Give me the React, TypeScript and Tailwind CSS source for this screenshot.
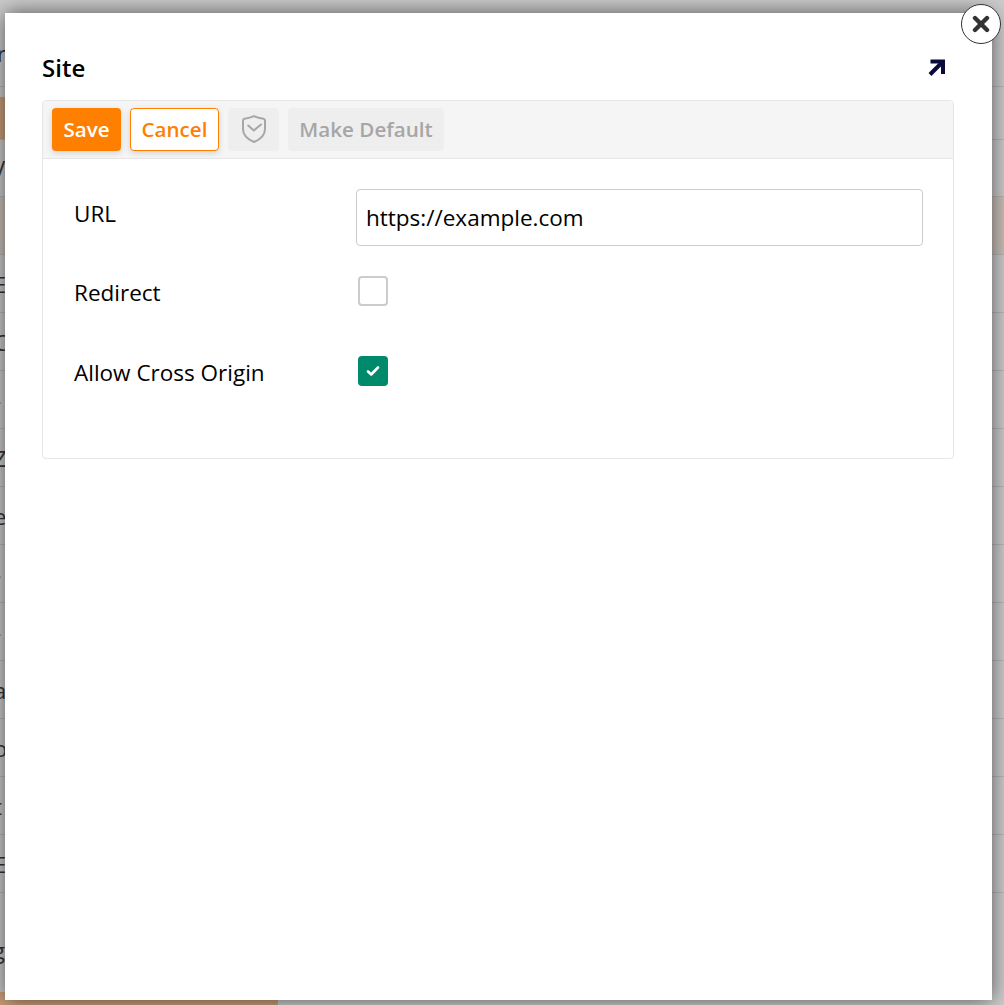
import React from 'react';

const bgRows = [
  { text: '', tint: true },
  { text: 'E', tint: false },
  { text: 'C', tint: false },
  { text: '-', tint: false },
  { text: 'Z', tint: false },
  { text: 'e', tint: false },
  { text: '-', tint: false },
  { text: '-', tint: false },
  { text: 'a', tint: false },
  { text: 'o', tint: false },
  { text: 't', tint: false },
  { text: 'E', tint: false },
];

// page behind the modal, only a strip of it shows
const Background = () => (
  <div className="w-full h-full overflow-hidden bg-white text-[22px] text-[#444] flex flex-col">
    <div className="h-[87px] shrink-0 border-b border-[#e4e4e4] flex items-start pt-[42px]">
      <span className="-ml-[3px] leading-none">r</span>
    </div>
    <div className="h-[53px] shrink-0 border-b border-[#e4e4e4] flex items-end">
      <div className="w-[40px] h-[42px] bg-[#ffc79a]" />
    </div>
    <div className="h-[57px] shrink-0 border-b border-[#e4e4e4] flex items-center">
      <span className="-ml-[8px] leading-none">V</span>
    </div>
    {bgRows.map((row, i) => (
      <div
        key={i}
        className={`h-[58px] shrink-0 border-b border-[#e4e4e4] flex items-center ${row.tint ? 'bg-[#fdf0e6]' : ''}`}
      >
        <span className="-ml-[6px] leading-none">{row.text}</span>
      </div>
    ))}
    <div className="h-[99px] shrink-0 flex items-start pt-[46px]">
      <span className="-ml-[7px] leading-none">g</span>
    </div>
    <div className="h-[13px] w-[278px] shrink-0 bg-[#ffc79a]" />
  </div>
);

const ShieldIcon = () => (
  <svg width="26" height="30" viewBox="0 0 26 30" fill="none" stroke="#a6a6a6" strokeWidth="2" strokeLinecap="round" strokeLinejoin="round">
    <path d="M2 5.5Q2 4 3.5 3.7C7 3.2 10 2.5 13 1.2C16 2.5 19 3.2 22.5 3.7Q24 4 24 5.5V14C24 20 19 24.5 13 27C7 24.5 2 20 2 14Z" />
    <path d="M7.2 10.5L12.8 15.5L20 9.5" />
  </svg>
);

export default function App() {
  return (
    <div className="relative w-[1004px] h-[1005px] overflow-hidden font-['Open_Sans',sans-serif]">
      <Background />
      <div className="absolute inset-0 bg-black/20" />

      <div className="absolute left-[5px] top-[13px] w-[987px] h-[987px] bg-white shadow-[0_0_20px_rgba(0,0,0,0.6)] pt-[37px] pl-[37px]">
        <div className="w-[912px] flex items-center justify-between h-[36px]">
          <h2 className="text-[24px] font-semibold text-black leading-none">Site</h2>
          <svg className="mr-[7px] -mt-[2px]" width="20" height="20" viewBox="0 0 20 20" fill="none" stroke="#0b0b3b" strokeWidth="4" strokeLinecap="butt">
            <path d="M3 17.5L15 5.5" />
            <path d="M3.5 4.5H16V17" />
          </svg>
        </div>

        <div className="mt-[14px] w-[912px] h-[359px] border border-[#e6e6e6] rounded-[4px]">
          <div className="h-[58px] bg-[#f5f5f5] border-b border-[#e6e6e6] rounded-t-[4px] flex items-start gap-[9px] pt-[7px] px-[9px] text-[20.6px] font-semibold">
            <button className="w-[69px] h-[43px] rounded-[4px] bg-[#ff7f00] text-white shadow-[0_2px_6px_rgba(0,0,0,0.15)]">Save</button>
            <button className="w-[89px] h-[43px] rounded-[4px] bg-white border border-[#ff7f00] text-[#ff7f00] shadow-[0_2px_6px_rgba(0,0,0,0.15)]">Cancel</button>
            <button className="w-[51px] h-[43px] rounded-[4px] bg-[#eeeeee] flex items-center justify-center"><ShieldIcon /></button>
            <button className="w-[156px] h-[43px] rounded-[4px] bg-[#eeeeee] text-[#a6a6a6]">Make Default</button>
          </div>

          <div className="pt-[30px] pl-[31px] text-[22.5px] text-black">
            <div className="flex items-start h-[57px]">
              <label className="w-[282px] leading-[50px]">URL</label>
              <input
                readOnly
                value="https://example.com"
                className="w-[567px] h-[57px] border border-[#cccccc] rounded-[4px] px-[9px] outline-none"
              />
            </div>
            <div className="flex items-center mt-[30px] h-[30px]">
              <label className="w-[284px] pt-[4px]">Redirect</label>
              <span className="w-[30px] h-[30px] rounded-[4px] border-2 border-[#cccccc] bg-white" />
            </div>
            <div className="flex items-center mt-[50px] h-[30px]">
              <label className="w-[284px] pt-[4px]">Allow Cross Origin</label>
              <span className="w-[30px] h-[30px] rounded-[4px] bg-[#00896b] flex items-center justify-center">
                <svg width="14" height="12" viewBox="0 0 14 12" fill="none" stroke="white" strokeWidth="2.6" strokeLinecap="round" strokeLinejoin="round">
                  <path d="M2 6.5L5.2 9.5L12 2.5" />
                </svg>
              </span>
            </div>
          </div>
        </div>
      </div>

      <button className="absolute left-[961px] top-[4px] w-[40px] h-[40px] rounded-full bg-white border-[1.5px] border-[#333333] flex items-center justify-center">
        <svg width="18" height="18" viewBox="0 0 18 18" fill="none" stroke="#333333" strokeWidth="4.4" strokeLinecap="round">
          <path d="M3 3L15 15" />
          <path d="M15 3L3 15" />
        </svg>
      </button>
    </div>
  );
}
